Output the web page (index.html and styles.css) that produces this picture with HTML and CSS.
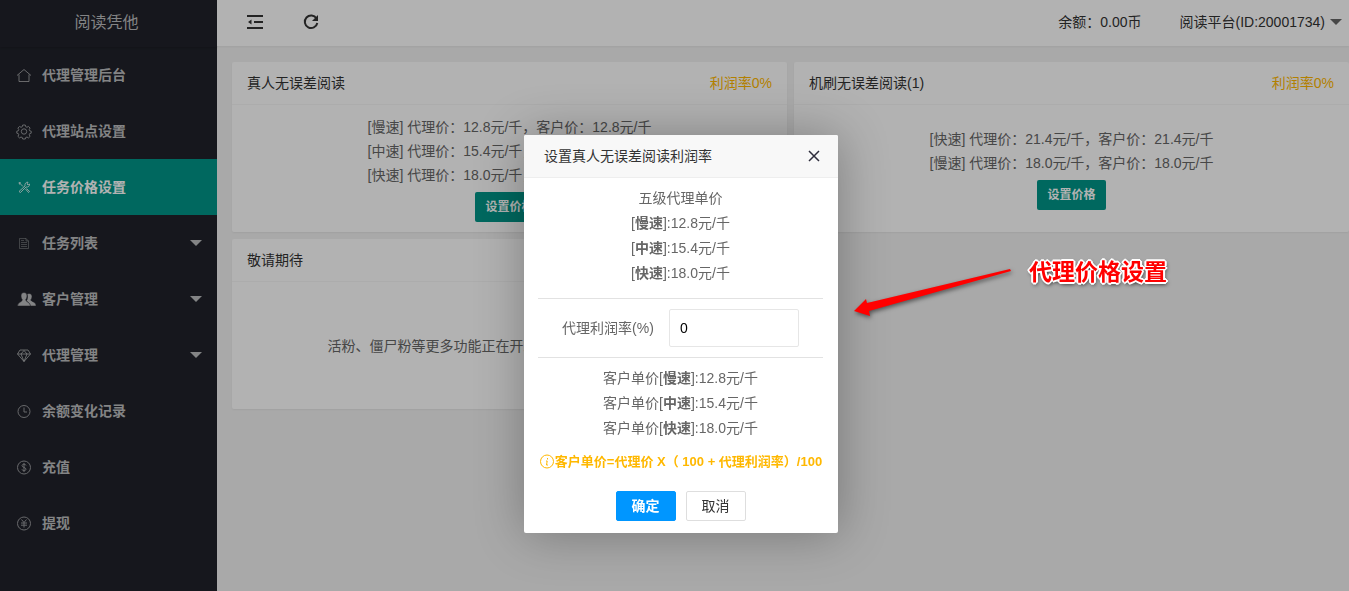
FILE: index.html
```
<!DOCTYPE html>
<html lang="zh-CN">
<head>
    <meta charset="utf-8">
    <title>任务价格设置</title>
    <link rel="stylesheet" href="styles.css">
</head>
<body>
    <div class="layout">
        <!-- Side menu -->
        <aside class="side">
            <div class="logo">阅读凭他</div>
            <nav>
                <a class="menu-item" href="#">
                    <svg class="icon" viewBox="0 0 16 16"><path d="M1 8.500L8 2.500l7 6M3 7.500v7h10v-7"/></svg>
                    <span>代理管理后台</span>
                </a>
                <a class="menu-item" href="#">
                    <svg class="icon" viewBox="0 0 16 16"><circle cx="8" cy="8.500" r="2.700"/><path d="M6.700 2h2.600l.4 1.700 1.300.6 1.500-.9 1.600 1.700-.9 1.500.5 1.200 1.500.4v2l-1.500.4-.5 1.200.9 1.500-1.600 1.600-1.500-.9-1.300.5-.4 1.500H6.700l-.4-1.500-1.300-.5-1.500.9-1.600-1.600.9-1.500-.5-1.200-1.500-.4v-2l1.500-.4.5-1.200-.9-1.500 1.600-1.700 1.500.9 1.300-.6z"/></svg>
                    <span>代理站点设置</span>
                </a>
                <a class="menu-item active" href="#">
                    <svg class="icon" viewBox="0 0 16 16"><path d="M3.500 4l3.500 3.500M3 3.500l2 .5M3 3.500l.5 2M9.500 10l3 3.500 1-1-3-3M3 12.500l6-5.500M4.500 13.500l5.500-5.500M3 12.500l1.500 1M13.500 5l-1.500 1-1-1 1-1.800c-2-.4-3.500 1.800-3 3.800M10 8c2 .5 4-1 3.500-3"/></svg>
                    <span>任务价格设置</span>
                </a>
                <a class="menu-item" href="#">
                    <svg class="icon dim" viewBox="0 0 16 16"><path d="M3.500 3.500h6.500l2.500 2.500v7.500h-9zM10 3.500v2.500h2.500M5 7.500h6M5 9.500h6M5 11.500h6M5 5.500h3"/></svg>
                    <span>任务列表</span>
                    <i class="caret"></i>
                </a>
                <a class="menu-item" href="#">
                    <svg class="icon solid" viewBox="0 0 20 16"><path d="M13 2.500c2 0 3 1.300 3 3.200 0 1.500-.8 2.500-1.300 3.300.2 1.500 5.300 2 5.300 5v1h-6c0-2.500-2-4-4-5 1-.7 1.500-2 1.500-4s-.5-2.300-.5-2.500c.5-.7 1.200-1 2-1z"/><path d="M8 1.500c2 0 3 1.500 3 3.500 0 1.700-.7 3-1.300 3.800.1 2.200 4.800 2.700 4.800 6.200H1.500c0-3.500 4.700-4 4.800-6.200C5.700 8 5 6.700 5 5c0-2 1-3.500 3-3.500z"/></svg>
                    <span>客户管理</span>
                    <i class="caret"></i>
                </a>
                <a class="menu-item" href="#">
                    <svg class="icon" viewBox="0 0 16 16"><path d="M4 3h8l2.500 4L8 14.500 1.500 7zM1.500 7h13M5 7l3 7.500L11 7M5 7l3-3.500L11 7"/></svg>
                    <span>代理管理</span>
                    <i class="caret"></i>
                </a>
                <a class="menu-item" href="#">
                    <svg class="icon" viewBox="0 0 16 16"><circle cx="8" cy="8.500" r="6"/><path d="M8 4.500v4.500h3"/></svg>
                    <span>余额变化记录</span>
                </a>
                <a class="menu-item" href="#">
                    <svg class="icon" viewBox="0 0 16 16"><circle cx="8" cy="8.500" r="6.500"/><path d="M8 4v9M10 6.500C9.800 4.700 6 4.700 6 6.700 6 8.600 10 8.200 10 10.200 10 12.200 6.200 12.200 6 10.300"/></svg>
                    <span>充值</span>
                </a>
                <a class="menu-item" href="#">
                    <svg class="icon" viewBox="0 0 16 16"><circle cx="8" cy="8.500" r="6.500"/><path d="M5.500 4.500L8 7.500l2.500-3M8 7.500v5M5 8h6M5 10.200h6"/></svg>
                    <span>提现</span>
                </a>
            </nav>
        </aside>

        <div class="content">
            <header class="header">
                <button class="header-btn" aria-label="收起菜单">
                    <svg viewBox="0 0 16 16"><path d="M0 2h16M7 8h9M0 14h16"/><path class="fill" d="M1 8l3.500-2.500v5z"/></svg>
                </button>
                <button class="header-btn" aria-label="刷新">
                    <svg viewBox="0 0 16 16"><path d="M13.500 4.500A6.300 6.300 0 1 0 14.300 9"/><path class="fill" d="M15 1v6H9z"/></svg>
                </button>
                <span class="balance">余额：0.00币</span>
                <a class="user" href="#">阅读平台(ID:20001734)<i class="caret"></i></a>
            </header>

            <main class="cards">
                <section class="card">
                    <div class="card-header"><span>真人无误差阅读</span><span class="rate">利润率0%</span></div>
                    <div class="card-body">
                        <p>[慢速] 代理价：12.8元/千，客户价：12.8元/千</p>
                        <p>[中速] 代理价：15.4元/千，客户价：15.4元/千</p>
                        <p>[快速] 代理价：18.0元/千，客户价：18.0元/千</p>
                        <button class="price-btn">设置价格</button>
                    </div>
                </section>
                <section class="card">
                    <div class="card-header"><span>机刷无误差阅读(1)</span><span class="rate">利润率0%</span></div>
                    <div class="card-body">
                        <p>[快速] 代理价：21.4元/千，客户价：21.4元/千</p>
                        <p>[慢速] 代理价：18.0元/千，客户价：18.0元/千</p>
                        <button class="price-btn">设置价格</button>
                    </div>
                </section>
                <section class="card">
                    <div class="card-header"><span>敬请期待</span></div>
                    <div class="card-body">
                        <p>活粉、僵尸粉等更多功能正在开发中，敬请期待，谢谢支持</p>
                    </div>
                </section>
            </main>
        </div>
    </div>

    <div class="shade"></div>

    <!-- Profit rate dialog -->
    <div class="dialog" role="dialog" aria-labelledby="dialog-title">
        <div class="dialog-title">
            <span id="dialog-title">设置真人无误差阅读利润率</span>
            <button class="close" aria-label="关闭">
                <svg viewBox="0 0 12 12"><path d="M1 1l10 10M11 1L1 11"/></svg>
            </button>
        </div>
        <form class="dialog-body">
            <div class="prices">
                <p>五级代理单价</p>
                <p>[<b>慢速</b>]:12.8元/千</p>
                <p>[<b>中速</b>]:15.4元/千</p>
                <p>[<b>快速</b>]:18.0元/千</p>
            </div>
            <div class="rate-row">
                <label for="rate">代理利润率(%)</label>
                <input id="rate" type="text" value="0">
            </div>
            <div class="prices">
                <p>客户单价[<b>慢速</b>]:12.8元/千</p>
                <p>客户单价[<b>中速</b>]:15.4元/千</p>
                <p>客户单价[<b>快速</b>]:18.0元/千</p>
            </div>
            <div class="tip">
                <svg viewBox="0 0 16 16"><circle cx="8" cy="7.500" r="6.500"/><path d="M8.500 4v1.500M7 7h1.200L7.500 11H9"/></svg>
                <span>客户单价=代理价 X（ 100 + 代理利润率）/100</span>
            </div>
            <div class="actions">
                <button type="button" class="btn primary">确定</button>
                <button type="button" class="btn">取消</button>
            </div>
        </form>
    </div>

    <!-- Annotation -->
    <div class="note">
        <svg viewBox="0 0 160 66"><path d="M158 13l1 2L17 55l1 5L2 55l12-12 1 4z"/></svg>
        <span>代理价格设置</span>
    </div>
</body>
</html>
```
FILE: styles.css
```
* {
    box-sizing: border-box;
}

body {
    margin: 0;
    background: #f2f2f2;
    color: #666;
    font: 14px/24px "Liberation Sans", "Noto Sans CJK SC", sans-serif;
    overflow: hidden;
}

p {
    margin: 0;
}

a {
    color: inherit;
    text-decoration: none;
}

button,
input {
    font: inherit;
    cursor: pointer;
}

svg {
    fill: none;
    stroke: currentColor;
}

.layout {
    display: flex;
    min-height: 100vh;
}

/* side menu */
.side {
    flex: 0 0 217px;
    background: #20222a;
    color: #bcbdbf;
}

.logo {
    height: 47px;
    line-height: 46px;
    font-size: 16px;
    text-align: center;
    padding-right: 4px;
    box-shadow: 0 1px 2px rgba(0, 0, 0, .15);
}

.menu-item {
    display: flex;
    align-items: center;
    height: 56px;
    padding: 0 15px 0 16px;
    font-weight: bold;
}

.menu-item.active {
    background: #009688;
    color: #fff;
}

.icon {
    width: 16px;
    height: 16px;
    margin-right: 10px;
    overflow: visible;
    opacity: .75;
}

.icon.dim {
    opacity: .4;
}

.icon.solid {
    width: 20px;
    margin-right: 6px;
    fill: currentColor;
    stroke: #20222a;
    stroke-width: .5;
    opacity: 1;
}

.caret {
    border: 6px solid transparent;
    border-top-color: currentColor;
    border-bottom: 0;
}

.menu-item .caret {
    margin-left: auto;
}

/* top bar */
.content {
    flex: 1;
    min-width: 0;
}

.header {
    display: flex;
    align-items: center;
    height: 46px;
    padding: 0 7px 2px 30px;
    background: #fff;
    color: #333;
    box-shadow: 0 1px 2px rgba(0, 0, 0, .05);
}

.header-btn {
    width: 16px;
    height: 16px;
    padding: 0;
    margin-right: 40px;
    border: 0;
    background: none;
    color: #333;
}

.header-btn svg {
    display: block;
    width: 16px;
    height: 16px;
    stroke-width: 2;
}

.header-btn .fill {
    fill: currentColor;
    stroke: none;
}

.balance {
    margin-left: auto;
}

.user {
    display: flex;
    align-items: center;
    gap: 5px;
    margin-left: 38px;
}

.user .caret {
    border-top-color: #666;
}

/* cards */
.cards {
    display: grid;
    grid-template-columns: 1fr 1fr;
    gap: 7px;
    padding: 16px 0 0 15px;
}

.card {
    display: flex;
    flex-direction: column;
    min-height: 170px;
    background: #fff;
    border-radius: 2px;
    box-shadow: 0 1px 2px rgba(0, 0, 0, .05);
}

.card-header {
    display: flex;
    justify-content: space-between;
    height: 43px;
    line-height: 42px;
    padding: 0 15px;
    border-bottom: 1px solid #f6f6f6;
    color: #333;
}

.rate {
    color: #ffb800;
}

.card-body {
    flex: 1;
    display: flex;
    flex-direction: column;
    align-items: center;
    justify-content: center;
    padding: 10px 15px;
}

.price-btn {
    height: 30px;
    margin-top: 5px;
    padding: 0 10px;
    border: 0;
    border-radius: 2px;
    background: #009688;
    color: #fff;
    font-size: 12px;
    font-weight: bold;
}

.shade {
    position: fixed;
    inset: 0;
    background: rgba(0, 0, 0, .3);
}

/* dialog */
.dialog {
    position: absolute;
    top: 135px;
    left: 524px;
    width: 314px;
    background: #fff;
    border-radius: 2px;
    box-shadow: 1px 1px 50px rgba(0, 0, 0, .3);
}

.dialog-title {
    display: flex;
    align-items: center;
    justify-content: space-between;
    height: 43px;
    padding: 0 18px 0 20px;
    border-bottom: 1px solid #eee;
    border-radius: 2px 2px 0 0;
    background: #f8f8f8;
    color: #333;
}

.close {
    width: 12px;
    height: 12px;
    padding: 0;
    border: 0;
    background: none;
    color: #2e2d3c;
}

.close svg {
    display: block;
    stroke-width: 1.5;
}

.dialog-body {
    padding: 8px 15px 12px 14px;
}

.prices {
    line-height: 25px;
    text-align: center;
}

.rate-row {
    display: flex;
    align-items: center;
    justify-content: center;
    gap: 15px;
    margin: 12px 0 8px;
    padding: 10px 0;
    border: solid #e2e2e2;
    border-width: 1px 0;
}

.rate-row input {
    width: 130px;
    height: 38px;
    padding: 0 10px;
    border: 1px solid #e6e6e6;
    border-radius: 2px;
    color: #000;
    cursor: text;
}

.tip {
    display: flex;
    align-items: center;
    justify-content: center;
    margin-top: 9px;
    color: #ffb800;
    font-size: 13px;
    font-weight: bold;
    white-space: nowrap;
}

.tip svg {
    flex: none;
    width: 16px;
    height: 16px;
}

.actions {
    display: flex;
    justify-content: center;
    gap: 10px;
    margin-top: 17px;
}

.btn {
    width: 60px;
    height: 30px;
    padding: 0;
    border: 1px solid #dedede;
    border-radius: 2px;
    background: #fff;
    color: #333;
}

.btn.primary {
    border-color: #0096ff;
    background: #0096ff;
    color: #fff;
    font-weight: bold;
}

/* red arrow and caption over the page */
.note {
    position: absolute;
    top: 256px;
    left: 852px;
    display: flex;
    align-items: flex-start;
    gap: 17px;
    color: #f00;
    font-size: 23px;
    line-height: 32px;
    font-weight: bold;
    white-space: nowrap;
}

.note svg {
    width: 160px;
    height: 66px;
    fill: currentColor;
    stroke: none;
    filter: drop-shadow(1px 2px 2px rgba(0, 0, 0, .5));
}

.note span {
    text-shadow: 1px 1px #fff, -1px -1px #fff, 1px -1px #fff, -1px 1px #fff,
        2px 0 #fff, -2px 0 #fff, 0 2px #fff, 0 -2px #fff, 1px 2px 4px #000;
}
```
